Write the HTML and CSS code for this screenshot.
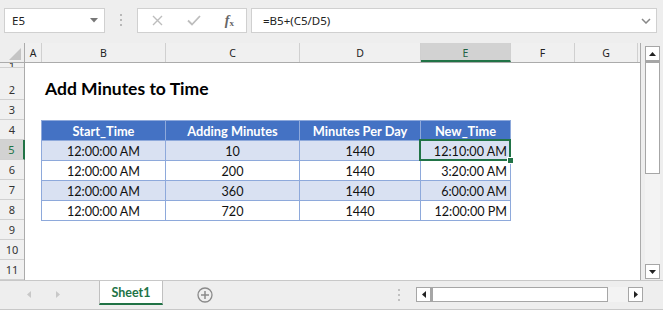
FILE: index.html
```html
<!DOCTYPE html>
<html lang="en">
<head>
    <meta charset="UTF-8">
    <meta name="viewport" content="width=device-width, initial-scale=1.0">
    <title>Add Minutes to Time</title>
    <link rel="stylesheet" href="styles.css">
</head>
<body>

    <div class="app">
        <!-- Formelfält -->
        <div class="formula-bar">
            <div class="name-box">
                <span>E5</span>
                <svg class="caret" width="8" height="5" viewBox="0 0 8 5"><path d="M0 0 H8 L4 4.5 Z" fill="#777"/></svg>
            </div>
            <svg class="grip" width="3" height="13" viewBox="0 0 3 13">
                <rect x="0" y="0" width="2" height="2" fill="#b8b8b8"/>
                <rect x="0" y="5" width="2" height="2" fill="#b8b8b8"/>
                <rect x="0" y="10" width="2" height="2" fill="#b8b8b8"/>
            </svg>
            <div class="fx-buttons">
                <svg width="11" height="11" viewBox="0 0 11 11"><path d="M1 1 L10 10 M10 1 L1 10" stroke="#bdbdbd" stroke-width="1.4"/></svg>
                <svg width="14" height="11" viewBox="0 0 14 11"><path d="M1 5.5 L5 9.5 L13 1" stroke="#bdbdbd" stroke-width="1.8" fill="none"/></svg>
                <span class="fx"><i>f</i><sub>x</sub></span>
            </div>
            <div class="formula-input">
                <span>=B5+(C5/D5)</span>
                <svg width="10" height="6" viewBox="0 0 10 6"><path d="M1 1 L5 5 L9 1" stroke="#888" stroke-width="1.5" fill="none"/></svg>
            </div>
        </div>

        <div class="workspace">
            <div class="grid-pane">
                <div class="col-headers">
                    <div class="corner">
                        <svg width="12" height="12" viewBox="0 0 12 12"><path d="M12 0 V12 H0 Z" fill="#c4c4c4"/></svg>
                    </div>
                    <div class="col-h w-a">A</div>
                    <div class="col-h w-b">B</div>
                    <div class="col-h w-c">C</div>
                    <div class="col-h w-d">D</div>
                    <div class="col-h w-e active">E</div>
                    <div class="col-h w-f">F</div>
                    <div class="col-h w-g">G</div>
                    <div class="col-h w-h"></div>
                </div>

                <div class="sheet-body">
                    <div class="row-headers">
                        <div class="row-h r-thin"><span>1</span></div>
                        <div class="row-h r-tall">2</div>
                        <div class="row-h">3</div>
                        <div class="row-h">4</div>
                        <div class="row-h active">5</div>
                        <div class="row-h">6</div>
                        <div class="row-h">7</div>
                        <div class="row-h">8</div>
                        <div class="row-h">9</div>
                        <div class="row-h">10</div>
                        <div class="row-h">11</div>
                    </div>

                    <div class="cells">
                        <div class="title">Add Minutes to Time</div>

                        <div class="data-table">
                            <div class="th">Start_Time</div>
                            <div class="th">Adding Minutes</div>
                            <div class="th">Minutes Per Day</div>
                            <div class="th">New_Time</div>

                            <div class="td band">12:00:00 AM</div>
                            <div class="td band">10</div>
                            <div class="td band">1440</div>
                            <div class="td band right selected">12:10:00 AM<span class="fill-handle"></span></div>

                            <div class="td">12:00:00 AM</div>
                            <div class="td">200</div>
                            <div class="td">1440</div>
                            <div class="td right">3:20:00 AM</div>

                            <div class="td band">12:00:00 AM</div>
                            <div class="td band">360</div>
                            <div class="td band">1440</div>
                            <div class="td band right">6:00:00 AM</div>

                            <div class="td">12:00:00 AM</div>
                            <div class="td">720</div>
                            <div class="td">1440</div>
                            <div class="td right">12:00:00 PM</div>
                        </div>
                    </div>
                </div>
            </div>

            <div class="vscroll">
                <div class="sb-btn">
                    <svg width="7" height="4" viewBox="0 0 7 4"><path d="M0 4 H7 L3.5 0 Z" fill="#222"/></svg>
                </div>
                <div class="v-thumb"></div>
                <div class="v-track"></div>
                <div class="sb-btn">
                    <svg width="7" height="4" viewBox="0 0 7 4"><path d="M0 0 H7 L3.5 4 Z" fill="#222"/></svg>
                </div>
            </div>
        </div>

        <div class="tab-bar">
            <div class="tab-nav">
                <svg width="4" height="7" viewBox="0 0 4 7"><path d="M4 0 V7 L0 3.5 Z" fill="#c8c8c8"/></svg>
                <svg width="4" height="7" viewBox="0 0 4 7"><path d="M0 0 V7 L4 3.5 Z" fill="#c8c8c8"/></svg>
            </div>
            <div class="sheet-tab">Sheet1</div>
            <svg class="add-sheet" width="16" height="16" viewBox="0 0 16 16">
                <circle cx="8" cy="8" r="7" stroke="#8a8a8a" stroke-width="1.3" fill="none"/>
                <path d="M8 4 V12 M4 8 H12" stroke="#8a8a8a" stroke-width="1.5"/>
            </svg>
            <svg class="h-grip" width="2" height="12" viewBox="0 0 2 12">
                <rect x="0" y="0" width="2" height="2" fill="#c0c0c0"/>
                <rect x="0" y="5" width="2" height="2" fill="#c0c0c0"/>
                <rect x="0" y="10" width="2" height="2" fill="#c0c0c0"/>
            </svg>
            <div class="hscroll">
                <div class="sb-btn">
                    <svg width="4" height="7" viewBox="0 0 4 7"><path d="M4 0 V7 L0 3.5 Z" fill="#222"/></svg>
                </div>
                <div class="h-thumb"></div>
                <div class="h-track"></div>
                <div class="sb-btn">
                    <svg width="4" height="7" viewBox="0 0 4 7"><path d="M0 0 V7 L4 3.5 Z" fill="#222"/></svg>
                </div>
            </div>
        </div>
    </div>

</body>
</html>
```

FILE: styles.css
```css
/* Grundläggande stilar */
body {
    margin: 0;
    padding: 0;
    background-color: #fff;
    font-family: 'Noto Sans', Arial, sans-serif;
    color: #222;
}
.app {
    width: 663px;
    height: 310px;
    overflow: hidden;
    background-color: #eeeeee;
}

/* Formelfält */
.formula-bar {
    height: 43px;
    box-sizing: border-box;
    padding: 8px 6px 0 4px;
    display: flex;
    align-items: flex-start;
}
.name-box,
.fx-buttons,
.formula-input {
    height: 25px;
    box-sizing: border-box;
    background-color: #fff;
    border: 1px solid #d0d0d0;
    display: flex;
    align-items: center;
}
.name-box {
    width: 101px;
    padding: 0 6px 0 7px;
    justify-content: space-between;
    font-size: 11.5px;
}
.grip {
    margin: 6px 14px 0 15px;
}
.fx-buttons {
    width: 110px;
    padding: 0 12px 0 14px;
    justify-content: space-between;
}
.fx {
    font-family: 'Liberation Serif', serif;
    font-size: 14px;
    font-weight: bold;
    color: #666;
}
.fx sub {
    font-size: 9px;
    vertical-align: -1px;
}
.formula-input {
    flex: 1;
    margin-left: 4px;
    padding: 0 5px 0 11px;
    justify-content: space-between;
    font-size: 11.5px;
}

/* Rutnät */
.workspace {
    display: flex;
    height: 237px;
}
.grid-pane {
    width: 641px;
    border-right: 1px solid #ababab;
    box-sizing: border-box;
}
.col-headers {
    display: flex;
    height: 20px;
    border-bottom: 1px solid #ababab;
    box-sizing: border-box;
}
.corner {
    width: 25px;
    box-sizing: border-box;
    border-right: 1px solid #ababab;
    display: flex;
    align-items: flex-end;
    justify-content: flex-end;
    padding: 0 3px 2px 0;
}
.col-h {
    box-sizing: border-box;
    border-right: 1px solid #d0d0d0;
    display: flex;
    align-items: center;
    justify-content: center;
    font-size: 10.5px;
    color: #222;
    background-color: #f0f0f0;
}
.col-h.active {
    background-color: #d2d2d2;
    color: #216344;
    border-bottom: 2px solid #217346;
    padding-top: 2px;
}
.w-a { width: 17px; }
.w-b { width: 124px; }
.w-c { width: 134px; }
.w-d { width: 121px; }
.w-e { width: 90px; }
.w-f { width: 64px; }
.w-g { width: 63px; }
.w-h { width: 2px; border-right: none; }

.sheet-body {
    display: flex;
    height: 217px;
}
.row-headers {
    width: 25px;
    box-sizing: border-box;
    border-right: 1px solid #ababab;
    background-color: #f0f0f0;
}
.row-h {
    height: 20px;
    box-sizing: border-box;
    border-bottom: 1px solid #d0d0d0;
    display: flex;
    align-items: center;
    justify-content: center;
    font-size: 11px;
    color: #333;
    overflow: hidden;
}
.row-h.r-thin {
    height: 5px;
    align-items: flex-end;
}
.row-h.r-thin span {
    line-height: 11px;
    margin-bottom: -4px;
}
.row-h.r-tall { height: 32px; padding-top: 12px; }
.row-h.active {
    background-color: #d2d2d2;
    color: #217346;
    border-right: 2px solid #217346;
    margin-right: -1px;
}

.cells {
    flex: 1;
    background-color: #fff;
    font-family: Lato, 'Liberation Sans', sans-serif;
    font-size: 12.6px;
    color: #111;
}
.title {
    height: 33px;
    margin: 4px 0 20px 20px;
    padding-top: 11px;
    box-sizing: border-box;
    font-size: 17.5px;
    font-weight: bold;
    color: #000;
}

/* Tabell */
.data-table {
    display: grid;
    grid-template-columns: 124px 134px 121px 90px;
    grid-auto-rows: 20px;
    width: 470px;
    margin-left: 16px;
    border-top: 1px solid #8ea9db;
    border-left: 1px solid #8ea9db;
    box-sizing: border-box;
}
.th,
.td {
    border-right: 1px solid #8ea9db;
    border-bottom: 1px solid #8ea9db;
    display: flex;
    align-items: center;
    justify-content: center;
    padding: 1px 3px 0;
}
.th {
    background-color: #4472c4;
    color: #fff;
    font-weight: bold;
    font-size: 12.8px;
}
.td.band {
    background-color: #d9e1f2;
}
.td.right {
    justify-content: flex-end;
}
.td.selected {
    position: relative;
}
.td.selected::after {
    content: "";
    position: absolute;
    left: -2px;
    top: -2px;
    right: -1px;
    bottom: -1px;
    border: 2px solid #217346;
}
.fill-handle {
    position: absolute;
    right: -4px;
    bottom: -4px;
    width: 5px;
    height: 5px;
    background-color: #217346;
    border: 1px solid #fff;
    z-index: 1;
}

/* Rullningslister */
.vscroll {
    width: 22px;
    padding: 3px 3px 0 4px;
    box-sizing: border-box;
    display: flex;
    flex-direction: column;
}
.sb-btn {
    width: 15px;
    height: 15px;
    box-sizing: border-box;
    border: 1px solid #a6a6a6;
    background-color: #fff;
    display: flex;
    align-items: center;
    justify-content: center;
}
.v-thumb {
    width: 15px;
    height: 113px;
    box-sizing: border-box;
    border: 1px solid #a6a6a6;
    border-top-width: 2px;
    background-color: #fff;
}
.v-track {
    height: 90px;
    background-color: #f3f3f3;
}

/* Flikfält */
.tab-bar {
    height: 30px;
    box-sizing: border-box;
    border-top: 1px solid #c8c8c8;
    border-bottom: 1px solid #c8c8c8;
    display: flex;
    align-items: flex-start;
}
.tab-nav {
    width: 99px;
    display: flex;
    gap: 25px;
    padding: 10px 0 0 27px;
    box-sizing: border-box;
}
.sheet-tab {
    width: 64px;
    height: 24px;
    box-sizing: border-box;
    background-color: #fff;
    border-left: 1px solid #c0c0c0;
    border-right: 1px solid #c0c0c0;
    border-bottom: 2px solid #217346;
    display: flex;
    align-items: center;
    justify-content: center;
    font-family: Lato, 'Liberation Sans', sans-serif;
    font-size: 12.5px;
    font-weight: bold;
    color: #217346;
}
.add-sheet {
    margin: 6px 0 0 34px;
}
.h-grip {
    margin: 8px 0 0 185px;
}
.hscroll {
    display: flex;
    margin: 6px 0 0 16px;
}
.h-thumb {
    width: 177px;
    height: 15px;
    box-sizing: border-box;
    border: 1px solid #a6a6a6;
    border-left-width: 2px;
    background-color: #fff;
}
.h-track {
    width: 20px;
    height: 15px;
    background-color: #f3f3f3;
}
```
